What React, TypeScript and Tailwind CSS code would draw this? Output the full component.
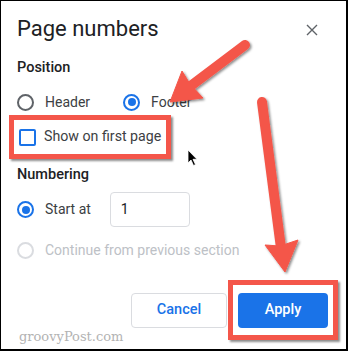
import React from "react";

const Radio = ({ checked, disabled }: { checked?: boolean; disabled?: boolean }) => (
  <span
    className={
      "flex h-[17px] w-[17px] shrink-0 items-center justify-center rounded-full border-2 " +
      (checked ? "border-[#1a73e8]" : disabled ? "border-[#dadce0]" : "border-[#5f6368]")
    }
  >
    {checked && <span className="h-[8px] w-[8px] rounded-full bg-[#1a73e8]" />}
  </span>
);

export default function App() {
  return (
    <div
      className="relative h-[351px] w-[348px] overflow-hidden border border-r-2 border-b-2 border-black bg-white text-[#202124]"
      style={{ fontFamily: "Roboto, 'Liberation Sans', sans-serif" }}
    >
      {/* Title */}
      <div className="flex h-[56px] items-center justify-between pl-4 pr-[28px]">
        <div className="text-[22px] leading-none text-[#202124]">Page numbers</div>
        <svg width="12" height="12" viewBox="0 0 12 12" className="mt-[1px]">
          <path d="M1 1 L11 11 M11 1 L1 11" stroke="#5f6368" strokeWidth="1.4" />
        </svg>
      </div>

      {/* Position */}
      <div className="flex h-[23px] items-center pl-4 text-[14.5px] font-medium leading-none">Position</div>
      <div className="flex h-[44px] items-center pl-4 text-[14px] text-[#3c4043]">
        <Radio />
        <span className="ml-[11px]">Header</span>
        <span className="ml-[33px]">
          <Radio checked />
        </span>
        <span className="ml-[11px]">Footer</span>
      </div>

      {/* Show on first page (highlighted) */}
      <div className="-mt-[9px] ml-[8px] flex h-[44px] w-[162px] items-center border-[5px] border-[#f4564a] pl-[5px] shadow-[2px_2px_2px_rgba(0,0,0,0.45)]">
        <span className="h-[17px] w-[17px] shrink-0 rounded-[2px] border-2 border-[#1a73e8]" />
        <span className="ml-[8px] text-[14.2px] text-[#3c4043]">Show on first page</span>
      </div>

      {/* Numbering */}
      <div className="flex h-[33px] items-center pl-4 text-[14.5px] font-medium leading-none">Numbering</div>
      <div className="flex h-[35px] items-center pl-4 text-[14px] text-[#3c4043]">
        <Radio checked />
        <span className="ml-[11px]">Start at</span>
        <div className="ml-[19px] flex h-[35px] w-[80px] items-center rounded-[4px] border border-[#dadce0] pl-[10px] text-[14px] text-[#202124]">
          1
        </div>
      </div>
      <div className="flex h-[46px] items-center pl-4 text-[14px] text-[#bdc1c6]">
        <Radio disabled />
        <span className="ml-[11px]">Continue from previous section</span>
      </div>

      {/* Buttons */}
      <div className="mt-[7px] flex h-[60px] items-center justify-end pr-[8px]">
        <button className="flex h-[35px] w-[96px] items-center justify-center rounded-[4px] border border-[#dadce0] bg-white text-[14.5px] font-medium text-[#1a73e8]">
          Cancel
        </button>
        <div className="ml-[1px] flex h-[60px] w-[110px] items-center justify-center border-[5px] border-[#f4564a] shadow-[2px_2px_2px_rgba(0,0,0,0.45)]">
          <button className="flex h-[35px] w-[90px] items-center justify-center rounded-[4px] bg-[#1a73e8] text-[14.5px] font-medium text-white">
            Apply
          </button>
        </div>
      </div>

      {/* Watermark */}
      <div
        className="absolute left-[18px] top-[329px] text-[13px] leading-none text-[#b3b3b3]"
        style={{ fontFamily: "'DejaVu Serif', serif" }}
      >
        groovyPost.com
      </div>

      {/* Annotation arrows & cursor overlay */}
      <svg className="pointer-events-none absolute left-[-1px] top-[-1px]" width="348" height="351" viewBox="0 0 348 351">
        <defs>
          <filter id="sh" x="-20%" y="-20%" width="140%" height="140%">
            <feDropShadow dx="1.5" dy="1.5" stdDeviation="1" floodColor="#000" floodOpacity="0.45" />
          </filter>
        </defs>
        <g filter="url(#sh)" fill="#f4564a" stroke="#f4564a">
          <line x1="245" y1="45" x2="188" y2="88" strokeWidth="10" strokeLinecap="round" />
          <polygon points="170,102 182,71 190,84 203,98" strokeWidth="1" strokeLinejoin="round" />
          <line x1="262" y1="102" x2="281" y2="248" strokeWidth="10" strokeLinecap="round" />
          <polygon points="285,272 265,245 280,246 298,240" strokeWidth="1" strokeLinejoin="round" />
        </g>
        <path
          d="M188 150 L188 163 L191 160 L193.5 165.5 L195.5 164.6 L193 159.3 L197 159.3 Z"
          fill="#000"
          stroke="#fff"
          strokeWidth="0.8"
          strokeLinejoin="round"
        />
      </svg>
    </div>
  );
}
